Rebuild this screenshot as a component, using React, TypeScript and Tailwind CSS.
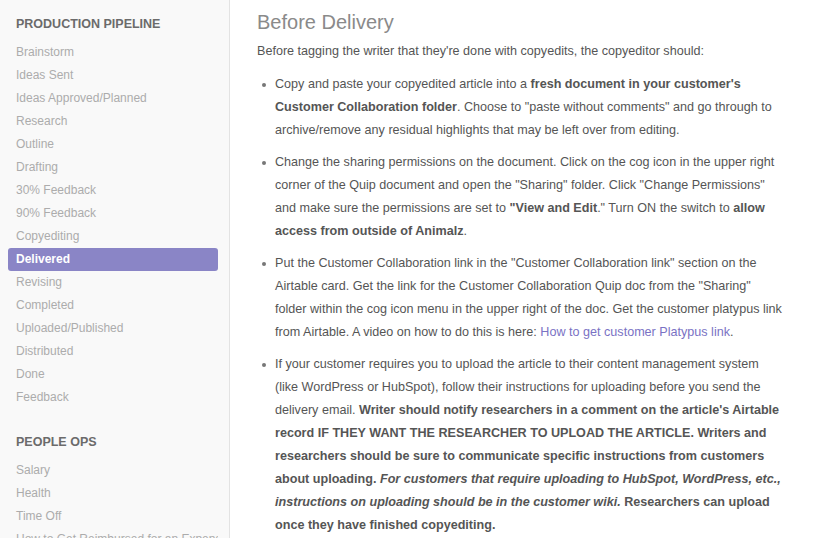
import React from "react";

const pipeline = [
  "Brainstorm",
  "Ideas Sent",
  "Ideas Approved/Planned",
  "Research",
  "Outline",
  "Drafting",
  "30% Feedback",
  "90% Feedback",
  "Copyediting",
  "Delivered",
  "Revising",
  "Completed",
  "Uploaded/Published",
  "Distributed",
  "Done",
  "Feedback",
];

const peopleOps = ["Salary", "Health", "Time Off", "How to Get Reimbursed for an Expense"];

const NavItem = ({ label, active }: { label: string; active?: boolean }) => (
  <div
    className={
      active
        ? "mx-2 h-[23px] w-[210px] rounded-[3px] bg-[#8a85c6] px-2 text-[12px] leading-[23px] font-bold text-white whitespace-nowrap"
        : "mx-2 h-[23px] w-[210px] px-2 text-[12px] leading-[23px] text-[#acacac] whitespace-nowrap overflow-hidden"
    }
  >
    {label}
  </div>
);

const Sidebar = () => (
  <aside className="w-[230px] shrink-0 border-r border-[#e3e3e3] bg-[#f9f9f9] pt-[15px]">
    <h2 className="px-4 text-[12.5px] leading-[18px] font-bold text-[#6b6b6b]">
      PRODUCTION PIPELINE
    </h2>
    <div className="mt-[8px]">
      {pipeline.map((p) => (
        <NavItem key={p} label={p} active={p === "Delivered"} />
      ))}
    </div>
    <h2 className="mt-[24px] px-4 text-[12.5px] leading-[18px] font-bold text-[#6b6b6b]">
      PEOPLE OPS
    </h2>
    <div className="mt-[8px]">
      {peopleOps.map((p) => (
        <NavItem key={p} label={p} />
      ))}
    </div>
  </aside>
);

const Bullet = ({ children }: { children: React.ReactNode }) => (
  <li className="relative mb-[9px] pl-[18px]">
    <span className="absolute left-[5px] top-[10px] h-[4px] w-[4px] rounded-full bg-[#777]" />
    {children}
  </li>
);

export default function App() {
  return (
    <div
      className="flex h-screen w-full overflow-hidden bg-white"
      style={{ fontFamily: '"Liberation Sans", Arial, Helvetica, sans-serif' }}
    >
      <Sidebar />
      <main className="w-[555px] pl-[27px] pt-[8px] text-[12.6px] leading-[23px] text-[#555]">
        <h1 className="text-[20px] leading-[28px] text-[#8a8a8a]">Before Delivery</h1>
        <p className="mt-[4px]">
          Before tagging the writer that they're done with copyedits, the copyeditor should:
        </p>
        <ul className="mt-[10px]">
          <Bullet>
            Copy and paste your copyedited article into a{" "}
            <b>fresh document in your customer's Customer Collaboration folder</b>. Choose to "paste
            without comments" and go through to archive/remove any residual highlights that may be
            left over from editing.
          </Bullet>
          <Bullet>
            Change the sharing permissions on the document. Click on the cog icon in the upper right
            corner of the Quip document and open the "Sharing" folder. Click "Change Permissions"
            and make sure the permissions are set to <b>"View and Edit</b>." Turn ON the switch to{" "}
            <b>allow access from outside of Animalz</b>.
          </Bullet>
          <Bullet>
            Put the Customer Collaboration link in the "Customer Collaboration link" section on the
            Airtable card. Get the link for the Customer Collaboration Quip doc from the "Sharing"
            folder within the cog icon menu in the upper right of the doc. Get the customer
            platypus link from Airtable. A video on how to do this is here:{" "}
            <a className="text-[#7a72c4]">How to get customer Platypus link</a>.
          </Bullet>
          <Bullet>
            If your customer requires you to upload the article to their content management system
            (like WordPress or HubSpot), follow their instructions for uploading before you send the
            delivery email.{" "}
            <b>
              Writer should notify researchers in a comment on the article's Airtable record IF
              THEY WANT THE RESEARCHER TO UPLOAD THE ARTICLE. Writers and researchers should be sure
              to communicate specific instructions from customers about uploading.{" "}
              <i>
                For customers that require uploading to HubSpot, WordPress, etc., instructions on
                uploading should be in the customer wiki.
              </i>{" "}
              Researchers can upload once they have finished copyediting.
            </b>
          </Bullet>
        </ul>
      </main>
    </div>
  );
}
